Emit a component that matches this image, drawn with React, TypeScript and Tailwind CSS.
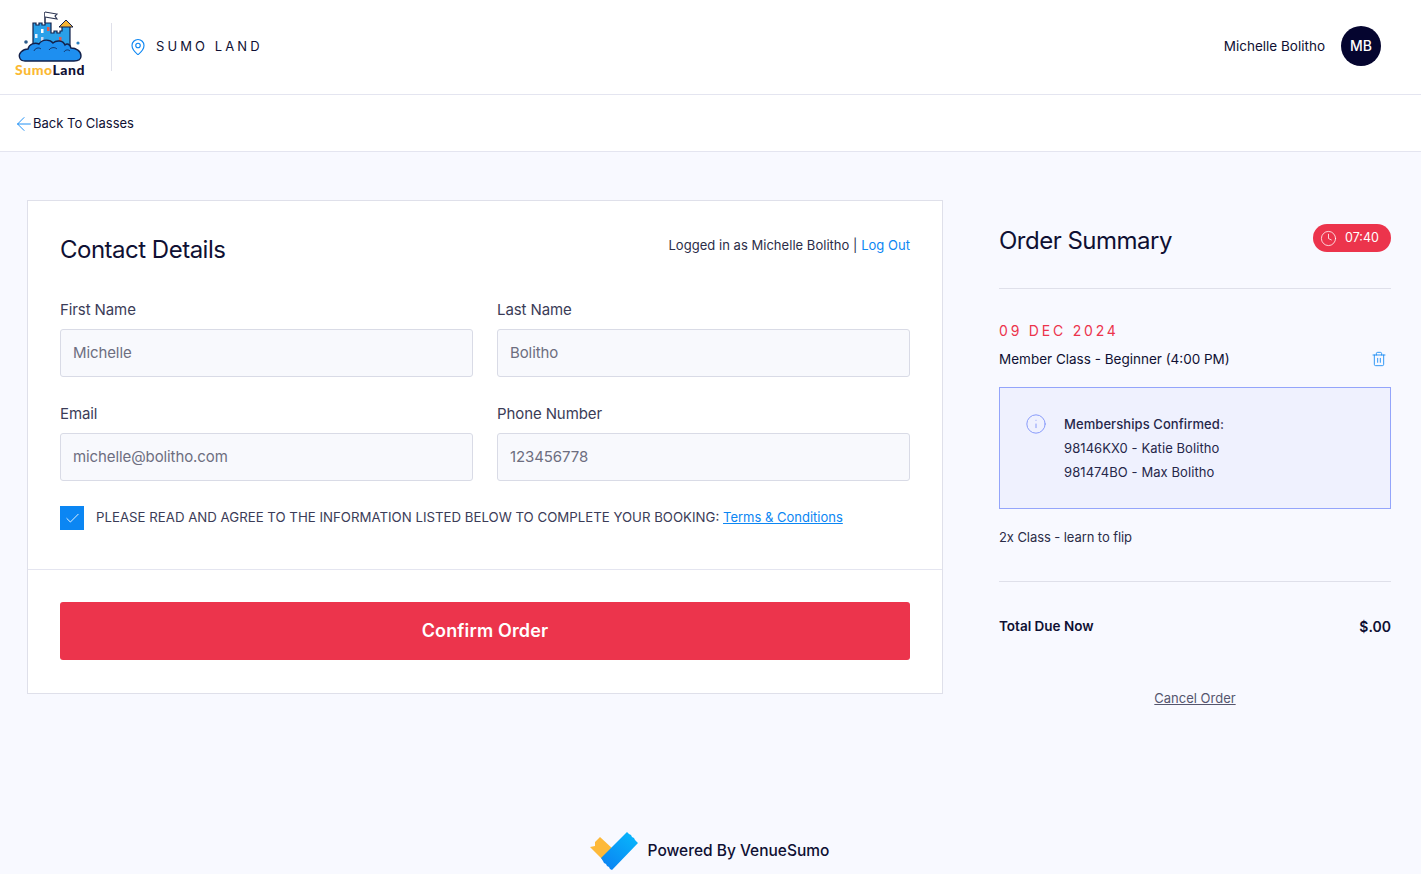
import { ArrowLeft, Check, Clock, Info, MapPin, Trash2 } from "lucide-react";

function SumoLogo() {
  return (
    <div className="-mt-[7px] flex w-[70px] flex-col items-center">
      <svg width="66" height="53" viewBox="0 0 66 53">
        {/* flag */}
        <path d="M28 13V2" fill="none" stroke="#2a3350" strokeWidth="1.6" />
        <path d="M28 2l12 2-2 2 2 3-12-2" fill="#fff" stroke="#2a3350" strokeWidth="1.1" />
        {/* castle */}
        <path d="M16 38V13h3v2h3v-2h3v2h3v-2h6v10h3v-2h3v2h3v-2h2v-5h8v22z" fill="#2aa0e8" stroke="#12204a" strokeWidth="1.2" />
        <path d="M42 17l7-7 7 7z" fill="#f6b432" stroke="#12204a" strokeWidth="1" />
        <rect x="24" y="19" width="2.5" height="4" fill="#fff" />
        <rect x="18" y="24" width="2.5" height="4" fill="#e6f2ff" />
        <rect x="30" y="17" width="2.5" height="4" fill="#e0584f" />
        <rect x="24" y="27" width="2.5" height="4" fill="#c9d6f0" />
        <rect x="42" y="27" width="2.5" height="4" fill="#e0584f" />
        {/* cloud */}
        <path d="M8 51C2 51 1 45 4 42c2-2 5-3 7-3 1-5 7-7 11-5 3-5 11-5 14-1 3-3 10-3 12 2 2-2 5-1 6 3 5 0 10 3 10 8 0 4-4 5-7 5z" fill="#1e8ff0" stroke="#12204a" strokeWidth="1.4" />
        <path d="M17 41c1-3 5-4 7-2M32 40c2-3 6-3 8-1M47 42c1-2 4-3 6-1" fill="none" stroke="#12204a" strokeWidth="0.8" />
        <circle cx="9" cy="32" r="1.8" fill="#2a5a8a" />
        <circle cx="61" cy="33" r="1.6" fill="#2a7fc0" />
      </svg>
      <div className="text-[14px] leading-[14px] font-black tracking-[0.55px] font-['Lato',sans-serif]">
        <span className="text-[#fbb934]">Sumo</span>
        <span className="text-[#0f1033]">Land</span>
      </div>
    </div>
  );
}

function VenueLogo() {
  return (
    <svg width="50" height="40" viewBox="0 0 50 40">
      <path d="M1 16l5-1 0-4 5-5 13 12-10 11z" fill="#fdb93a" />
      <path d="M12 27L38 1l2 2 2 1 1 2 2 1 1 2 3 3-26 27-2-1-1-2-2-1-1-2-2-1-1-2z" fill="url(#vs)" />
      <defs>
        <linearGradient id="vs" x1="18" y1="35" x2="42" y2="5" gradientUnits="userSpaceOnUse">
          <stop stopColor="#0b86f3" />
          <stop offset="1" stopColor="#08b2fb" />
        </linearGradient>
      </defs>
    </svg>
  );
}

function Field({ label, value }: { label: string; value: string }) {
  return (
    <div>
      <div className="mb-[9px] text-[15px] leading-[20px] tracking-[-0.1px] text-[#3b3c57]">{label}</div>
      <div className="flex h-[48px] items-center rounded-[3px] border border-[#d9dbe6] bg-[#f8f9fd] px-[12px] pt-[1px] text-[15px] tracking-[-0.1px] text-[#6d6e80]">
        {value}
      </div>
    </div>
  );
}

export default function App() {
  return (
    <div className="flex h-[874px] flex-col overflow-hidden bg-[#f8f9ff] font-['Inter',sans-serif] text-[#0f1033]">
      <header className="flex h-[95px] shrink-0 items-center justify-between border-b border-[#e4e5f0] bg-white pr-[40px] pl-[15px]">
        <div className="flex items-center">
          <SumoLogo />
          <div className="mr-[17px] ml-[26px] h-[48px] w-px bg-[#dfe0ea]" />
          <MapPin size={18} className="text-[#0b86f3]" strokeWidth={1.5} />
          <span className="ml-[9px] text-[13px] tracking-[3.1px]">SUMO LAND</span>
        </div>
        <div className="mb-[2px] flex items-center gap-[16px]">
          <span className="text-[13.5px]">Michelle Bolitho</span>
          <div className="flex h-[40px] w-[40px] items-center justify-center rounded-full bg-[#05052f] text-sm font-medium text-white">
            MB
          </div>
        </div>
      </header>

      <div className="flex h-[57px] shrink-0 items-center border-b border-[#e4e5f0] bg-white pt-[1px] pl-[13px] text-[13px]">
        <ArrowLeft size={22} strokeWidth={1} className="-mr-[2px] text-[#0b86f3]" />
        Back To Classes
      </div>

      <main className="flex shrink-0 items-start pt-[48px] pl-[27px]">
        <section className="h-[494px] w-[916px] border border-[#dfe0ea] bg-white">
          <div className="h-[369px] border-b border-[#e4e5f0] px-[32px] pt-[32px]">
            <div className="flex items-start justify-between">
              <h1 className="mt-[1px] text-2xl leading-[32px] tracking-[-0.5px]">Contact Details</h1>
              <p className="pt-[3px] text-[13px] leading-[18px] tracking-[0.03px] text-[#2c2d48]">
                Logged in as Michelle Bolitho | <span className="text-[#0b86f3]">Log Out</span>
              </p>
            </div>
            <div className="mt-[34px] grid grid-cols-2 gap-x-[24px] gap-y-[27px]">
              <Field label="First Name" value="Michelle" />
              <Field label="Last Name" value="Bolitho" />
              <Field label="Email" value="michelle@bolitho.com" />
              <Field label="Phone Number" value="123456778" />
            </div>
            <div className="mt-[25px] flex items-center gap-[12px]">
              <div className="flex h-[24px] w-[24px] items-center justify-center bg-[#0b86f3]">
                <Check size={17} strokeWidth={1.25} className="text-white" />
              </div>
              <p className="text-[13.25px] text-[#3b3c57]">
                PLEASE READ AND AGREE TO THE INFORMATION LISTED BELOW TO COMPLETE YOUR BOOKING:{" "}
                <span className="text-[13px] text-[#0b86f3] underline">Terms &amp; Conditions</span>
              </p>
            </div>
          </div>
          <div className="px-[32px] pt-[32px]">
            <button className="h-[58px] w-full rounded-[3px] bg-[#ec344c] text-lg font-semibold tracking-[0.15px] text-white">
              Confirm Order
            </button>
          </div>
        </section>

        <aside className="ml-[56px] w-[392px]">
          <div className="flex h-[89px] items-start justify-between border-b border-[#dfe0ea] pt-[24px]">
            <h2 className="mt-[1px] text-2xl leading-[32px] tracking-[-0.5px]">Order Summary</h2>
            <div className="flex h-[28px] w-[78px] items-center gap-[8px] rounded-full bg-[#ec344c] pl-[7px] text-[12.5px] text-white">
              <Clock size={17} strokeWidth={1.1} />
              07:40
            </div>
          </div>
          <div className="mt-[33px] text-sm leading-[18px] tracking-[2.8px] text-[#ec344c]">09 DEC 2024</div>
          <div className="mt-[9px] flex items-center justify-between pr-[4px] text-[13.5px] leading-[20px]">
            Member Class - Beginner (4:00 PM)
            <Trash2 size={16} strokeWidth={1.25} className="text-[#0b86f3]" />
          </div>
          <div className="mt-[18px] flex h-[122px] border border-[#94a5fb] bg-[#eff1fe] pt-[24px] pl-[25px] text-[13px] leading-[24px] tracking-[0.08px] text-[#26274a]">
            <Info size={22} strokeWidth={1} className="mt-[1px] text-[#7f93fa]" />
            <div className="ml-[17px]">
              <div className="font-medium">Memberships Confirmed:</div>
              <div>98146KX0 - Katie Bolitho</div>
              <div>981474BO - Max Bolitho</div>
            </div>
          </div>
          <div className="mt-[18px] text-[13px] leading-[20px] tracking-[-0.08px] text-[#2c2d48]">2x Class - learn to flip</div>
          <div className="mt-[34px] flex h-[90px] items-center justify-between border-t border-[#dfe0ea] text-[13.5px] font-semibold">
            <span>Total Due Now</span>
            <span className="text-[14px]">$.00</span>
          </div>
          <div className="mt-[17px] text-center text-[13px] leading-[20px] text-[#55566e] underline">Cancel Order</div>
        </aside>
      </main>

      <footer className="mt-[123px] flex shrink-0 items-center justify-center gap-[9px] pr-[3px]">
        <VenueLogo />
        <span className="text-[15.5px] font-medium">Powered By VenueSumo</span>
      </footer>
    </div>
  );
}
